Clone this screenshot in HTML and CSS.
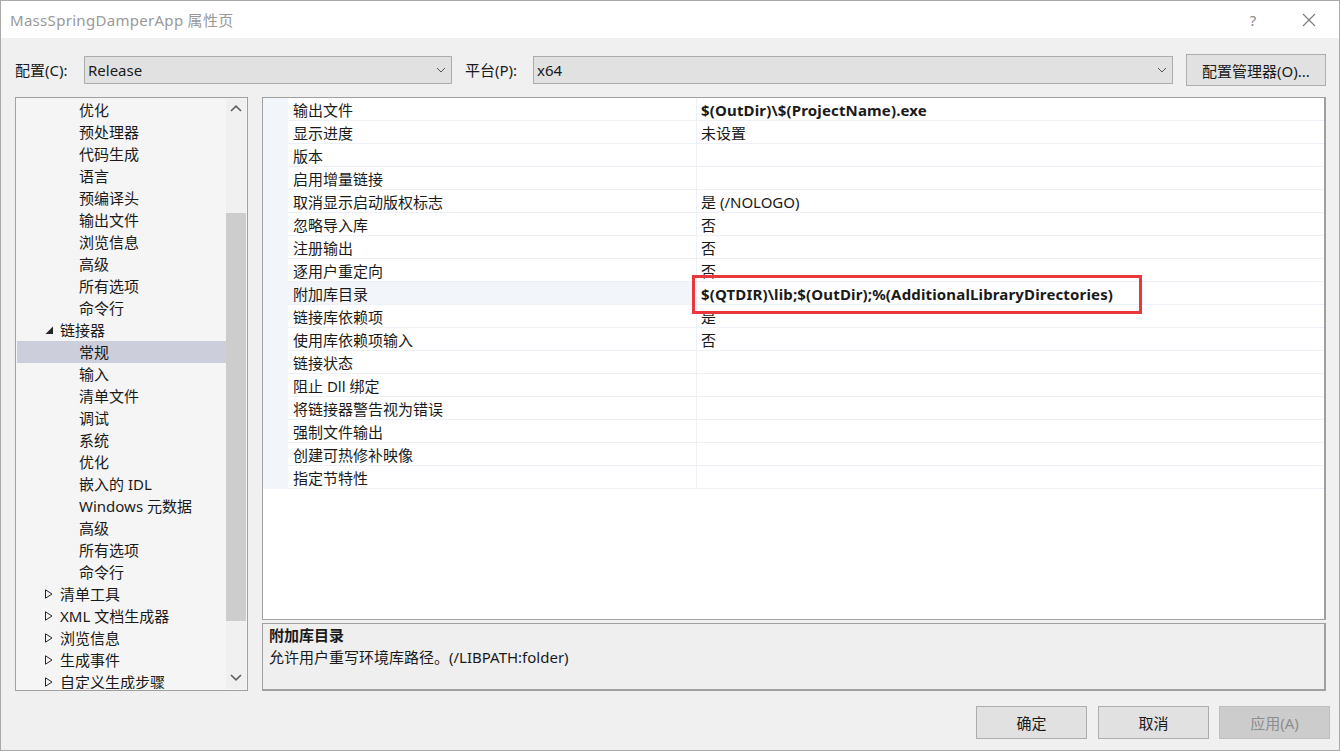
FILE: index.html
```html
<!DOCTYPE html>
<html lang="zh-CN">
<head>
<meta charset="utf-8">
<title>MassSpringDamperApp 属性页</title>
<link rel="stylesheet" href="styles.css">
</head>
<body>
<div class="window">
  <div class="titlebar">
    <span class="title">MassSpringDamperApp 属性页</span>
    <div class="caption-btns">
      <span class="help">?</span>
      <svg class="close" width="14" height="14" viewBox="0 0 14 14"><path d="M1 1 L13 13 M13 1 L1 13" stroke="#7a7a7a" stroke-width="1.1" fill="none"/></svg>
    </div>
  </div>
  <div class="client">
    <div class="config-row">
      <span class="lbl lbl-config">配置(C):</span>
      <div class="combo combo-config"><span class="combo-text">Release</span><svg class="chev" width="10" height="6" viewBox="0 0 10 6"><path d="M1 1 L5 5 L9 1" stroke="#555" stroke-width="1" fill="none"/></svg></div>
      <span class="lbl lbl-platform">平台(P):</span>
      <div class="combo combo-platform"><span class="combo-text">x64</span><svg class="chev" width="10" height="6" viewBox="0 0 10 6"><path d="M1 1 L5 5 L9 1" stroke="#555" stroke-width="1" fill="none"/></svg></div>
      <button class="btn btn-manager">配置管理器(O)...</button>
    </div>
    <div class="main">
      <div class="tree">
        <ul class="tree-list">
          <li class="t2">优化</li>
          <li class="t2">预处理器</li>
          <li class="t2">代码生成</li>
          <li class="t2">语言</li>
          <li class="t2">预编译头</li>
          <li class="t2">输出文件</li>
          <li class="t2">浏览信息</li>
          <li class="t2">高级</li>
          <li class="t2">所有选项</li>
          <li class="t2">命令行</li>
          <li class="t1"><svg class="exp" width="10" height="10" viewBox="0 0 10 10"><path d="M9 1.5 L9 9 L1.5 9 Z" fill="#262626"/></svg>链接器</li>
          <li class="t2 sel">常规</li>
          <li class="t2">输入</li>
          <li class="t2">清单文件</li>
          <li class="t2">调试</li>
          <li class="t2">系统</li>
          <li class="t2">优化</li>
          <li class="t2">嵌入的 IDL</li>
          <li class="t2">Windows 元数据</li>
          <li class="t2">高级</li>
          <li class="t2">所有选项</li>
          <li class="t2">命令行</li>
          <li class="t1"><svg class="exp" width="10" height="10" viewBox="0 0 10 10"><path d="M1.5 0.8 L8 5 L1.5 9.2 Z" fill="none" stroke="#262626" stroke-width="1"/></svg>清单工具</li>
          <li class="t1"><svg class="exp" width="10" height="10" viewBox="0 0 10 10"><path d="M1.5 0.8 L8 5 L1.5 9.2 Z" fill="none" stroke="#262626" stroke-width="1"/></svg>XML 文档生成器</li>
          <li class="t1"><svg class="exp" width="10" height="10" viewBox="0 0 10 10"><path d="M1.5 0.8 L8 5 L1.5 9.2 Z" fill="none" stroke="#262626" stroke-width="1"/></svg>浏览信息</li>
          <li class="t1"><svg class="exp" width="10" height="10" viewBox="0 0 10 10"><path d="M1.5 0.8 L8 5 L1.5 9.2 Z" fill="none" stroke="#262626" stroke-width="1"/></svg>生成事件</li>
          <li class="t1"><svg class="exp" width="10" height="10" viewBox="0 0 10 10"><path d="M1.5 0.8 L8 5 L1.5 9.2 Z" fill="none" stroke="#262626" stroke-width="1"/></svg>自定义生成步骤</li>
        </ul>
        <div class="vscroll">
          <div class="sarrow"><svg width="12" height="7" viewBox="0 0 12 7"><path d="M1 6 L6 1.2 L11 6" stroke="#606060" stroke-width="1.6" fill="none"/></svg></div>
          <div class="thumb"></div>
          <div class="sarrow sarrow-down"><svg width="12" height="7" viewBox="0 0 12 7"><path d="M1 1 L6 5.8 L11 1" stroke="#606060" stroke-width="1.6" fill="none"/></svg></div>
        </div>
      </div>
      <div class="right">
        <div class="grid">
          <div class="row"><div class="margin"></div><div class="name">输出文件</div><div class="value bold">$(OutDir)\$(ProjectName).exe</div></div>
          <div class="row"><div class="margin"></div><div class="name">显示进度</div><div class="value">未设置</div></div>
          <div class="row"><div class="margin"></div><div class="name">版本</div><div class="value"></div></div>
          <div class="row"><div class="margin"></div><div class="name">启用增量链接</div><div class="value"></div></div>
          <div class="row"><div class="margin"></div><div class="name">取消显示启动版权标志</div><div class="value">是 (/NOLOGO)</div></div>
          <div class="row"><div class="margin"></div><div class="name">忽略导入库</div><div class="value">否</div></div>
          <div class="row"><div class="margin"></div><div class="name">注册输出</div><div class="value">否</div></div>
          <div class="row"><div class="margin"></div><div class="name">逐用户重定向</div><div class="value">否</div></div>
          <div class="row row-sel"><div class="margin"></div><div class="name">附加库目录</div><div class="value bold">$(QTDIR)\lib;$(OutDir);%(AdditionalLibraryDirectories)</div></div>
          <div class="row"><div class="margin"></div><div class="name">链接库依赖项</div><div class="value">是</div></div>
          <div class="row"><div class="margin"></div><div class="name">使用库依赖项输入</div><div class="value">否</div></div>
          <div class="row"><div class="margin"></div><div class="name">链接状态</div><div class="value"></div></div>
          <div class="row"><div class="margin"></div><div class="name">阻止 Dll 绑定</div><div class="value"></div></div>
          <div class="row"><div class="margin"></div><div class="name">将链接器警告视为错误</div><div class="value"></div></div>
          <div class="row"><div class="margin"></div><div class="name">强制文件输出</div><div class="value"></div></div>
          <div class="row"><div class="margin"></div><div class="name">创建可热修补映像</div><div class="value"></div></div>
          <div class="row"><div class="margin"></div><div class="name">指定节特性</div><div class="value"></div></div>
          <div class="highlight"></div>
        </div>
        <div class="desc">
          <div class="desc-title">附加库目录</div>
          <div class="desc-text">允许用户重写环境库路径。(/LIBPATH:folder)</div>
        </div>
      </div>
    </div>
    <div class="footer">
      <button class="btn btn-foot">确定</button>
      <button class="btn btn-foot btn-cancel">取消</button>
      <button class="btn btn-foot btn-disabled">应用(A)</button>
    </div>
  </div>
</div>
</body>
</html>
```

FILE: styles.css
```css
* { box-sizing: border-box; }
html, body { margin: 0; padding: 0; }
body {
  width: 1340px;
  height: 751px;
  overflow: hidden;
  background: #f0f0f0;
  font-family: "Noto Sans", "Noto Sans CJK SC", sans-serif;
  font-size: 15px;
  color: #1a1a1a;
}
.window {
  width: 1340px;
  height: 751px;
  border: 1px solid #a9a9a9;
  display: flex;
  flex-direction: column;
  background: #f0f0f0;
}
.titlebar {
  height: 37px;
  background: #ffffff;
  display: flex;
  align-items: center;
  padding-left: 9px;
  flex: none;
}
.title {
  color: #999999;
  font-size: 15px;
  letter-spacing: 0.3px;
  line-height: 20px;
  flex: 1;
}
.caption-btns {
  display: flex;
  align-items: center;
  height: 100%;
}
.help {
  color: #8a8a8a;
  font-size: 15px;
  width: 20px;
  text-align: center;
  margin-right: 39px;
}
.close { margin-right: 23px; }
.client {
  flex: 1;
  display: flex;
  flex-direction: column;
  padding: 16px 13px 0 14px;
}
.config-row {
  height: 32px;
  display: flex;
  align-items: center;
  flex: none;
}
.lbl { line-height: 20px; white-space: nowrap; }
.lbl-config { width: 69px; }
.lbl-platform { width: 68px; margin-left: 13px; }
.combo {
  height: 28px;
  background: #e1e1e1;
  border: 1px solid #adadad;
  display: flex;
  align-items: center;
  padding-left: 3px;
  padding-right: 5px;
}
.combo-config { width: 368px; }
.combo-platform { flex: 1; }
.combo-text { flex: 1; line-height: 20px; }
.chev { flex: none; }
.btn {
  font-family: inherit;
  font-size: 15px;
  color: #1a1a1a;
  background: #e1e1e1;
  border: 1px solid #adadad;
  padding: 0;
}
.btn-manager {
  margin-left: 13px;
  width: 140px;
  height: 32px;
}
.main {
  margin-top: 11px;
  height: 594px;
  display: flex;
  gap: 14px;
  flex: none;
}
.tree {
  width: 233px;
  height: 594px;
  border: 1px solid #a0a0a0;
  background: #f5f5f5;
  padding: 1px;
  display: flex;
  overflow: hidden;
}
.tree-list {
  list-style: none;
  margin: 0;
  padding: 0;
  width: 209px;
  overflow: hidden;
}
.tree-list li {
  height: 22px;
  line-height: 22px;
  white-space: nowrap;
  display: flex;
  align-items: center;
}
.t2 { padding-left: 62px; }
.t1 { padding-left: 27px; }
.exp { flex: none; margin-right: 6px; }
.sel { background: #cccedb; }
.vscroll {
  width: 20px;
  background: #f0f0f0;
  display: flex;
  flex-direction: column;
  align-items: center;
}
.sarrow {
  height: 18px;
  width: 20px;
  display: flex;
  align-items: center;
  justify-content: center;
}
.thumb {
  margin-top: 96px;
  width: 20px;
  height: 408px;
  background: #cdcdcd;
}
.sarrow-down { margin-top: 47px; }
.right {
  flex: 1;
  display: flex;
  flex-direction: column;
  gap: 3px;
}
.grid {
  position: relative;
  height: 523px;
  background: #ffffff;
  border: 1px solid #a0a0a0;
  border-right-width: 2px;
}
.row {
  display: flex;
  height: 23px;
}
.margin {
  width: 25px;
  background: #f2f5fa;
  flex: none;
}
.name {
  width: 409px;
  flex: none;
  padding-left: 5px;
  padding-top: 1px;
  line-height: 22px;
  border-bottom: 1px solid #edf1f7;
  border-right: 1px solid #edf1f7;
  white-space: nowrap;
}
.value {
  flex: 1;
  padding-left: 4px;
  padding-top: 1px;
  line-height: 22px;
  border-bottom: 1px solid #edf1f7;
  white-space: nowrap;
}
.bold { font-weight: 700; letter-spacing: 0.15px; }
.row-sel .name { background: #f2f5fa; }
.highlight {
  position: absolute;
  left: 429px;
  top: 177px;
  width: 450px;
  height: 39px;
  border: 3px solid #e8373d;
}
.desc {
  height: 68px;
  background: #efefef;
  border: 1px solid #a0a0a0;
  border-right-width: 2px;
  border-bottom-width: 2px;
  padding-left: 6px;
}
.desc-title {
  font-weight: 700;
  line-height: 22px;
}
.desc-text { line-height: 22px; }
.footer {
  margin-top: 15px;
  margin-right: -4px;
  display: flex;
  justify-content: flex-end;
  gap: 11px;
}
.btn-foot {
  width: 111px;
  height: 33px;
}
.btn-disabled {
  margin-left: -1px;
  background: #cccccc;
  border-color: #bfbfbf;
  color: #8d8d8d;
}
```
